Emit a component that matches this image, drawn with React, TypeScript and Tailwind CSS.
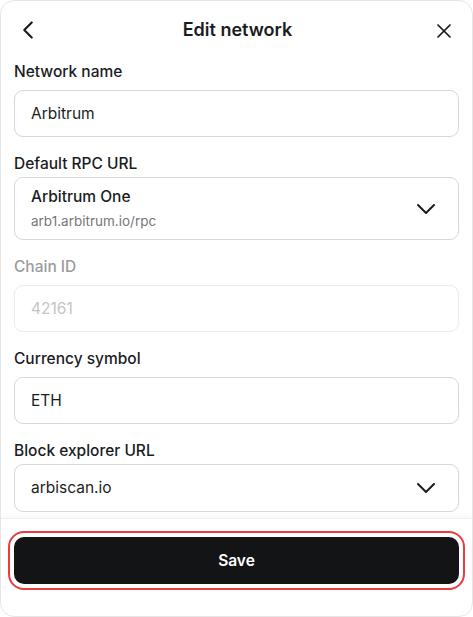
import { ChevronDown, ChevronLeft, X } from 'lucide-react';

function Label({ children, muted, tight }: { children: string; muted?: boolean; tight?: boolean }) {
  return (
    <div
      className={`text-[15.5px] font-medium leading-[20px] ${tight ? 'mb-[3px]' : 'mb-[8px]'} ${
        muted ? 'text-[#9a9b9d]' : 'text-[#1b1c1e]'
      }`}
    >
      {children}
    </div>
  );
}

function TextField({ value, disabled }: { value: string; disabled?: boolean }) {
  return (
    <div
      className={`h-[47px] w-full rounded-[9px] border px-[16px] flex items-center text-[15.5px] ${
        disabled ? 'border-[#ebebeb] text-[#c4c5c7]' : 'border-[#d6d7d9] text-[#1b1c1e]'
      }`}
    >
      {value}
    </div>
  );
}

export default function App() {
  return (
    <div
      className="w-[473px] h-[617px] bg-white rounded-[14px] border border-[#e6e6e6] overflow-hidden flex flex-col text-[#1b1c1e]"
      style={{ fontFamily: 'Inter, "Noto Sans", sans-serif' }}
    >
      {/* Header */}
      <div className="h-[54px] shrink-0 flex items-center justify-between pl-[12px] pr-[16px] pt-[3px]">
        <button type="button" className="w-[30px] h-[30px] flex items-center justify-center">
          <ChevronLeft size={30} strokeWidth={1.7} />
        </button>
        <h1 className="text-[18px] font-semibold">Edit network</h1>
        <button type="button" className="w-[24px] h-[24px] flex items-center justify-center mt-[2px]">
          <X size={24} strokeWidth={1.7} />
        </button>
      </div>

      {/* Form */}
      <div className="flex-1 flex flex-col gap-[17px] px-[13px] pt-[7px]">
        <div>
          <Label>Network name</Label>
          <TextField value="Arbitrum" />
        </div>

        <div>
          <Label tight>Default RPC URL</Label>
          <div className="h-[63px] w-full rounded-[9px] border border-[#d6d7d9] pl-[16px] pr-[16px] flex items-center justify-between">
            <div className="flex flex-col gap-[4px] mt-[1px]">
              <span className="text-[15.5px] font-medium leading-[20px]">Arbitrum One</span>
              <span className="text-[13.5px] text-[#76777a] leading-[20px]">arb1.arbitrum.io/rpc</span>
            </div>
            <ChevronDown size={32} strokeWidth={1.5} />
          </div>
        </div>

        <div>
          <Label muted>Chain ID</Label>
          <TextField value="42161" disabled />
        </div>

        <div>
          <Label>Currency symbol</Label>
          <TextField value="ETH" />
        </div>

        <div>
          <Label tight>Block explorer URL</Label>
          <div className="mt-[1px] h-[48px] w-full rounded-[9px] border border-[#d6d7d9] pl-[16px] pr-[16px] flex items-center justify-between text-[15.5px]">
            <span>arbiscan.io</span>
            <ChevronDown size={32} strokeWidth={1.5} />
          </div>
        </div>
      </div>

      {/* Footer */}
      <div className="h-[98px] shrink-0 px-[13px] pt-[18px] border-t border-[#f0f0f0] shadow-[0_-2px_6px_rgba(0,0,0,0.04)]">
        <button
          type="button"
          className="w-full h-[47px] rounded-[10px] bg-[#131416] text-white text-[15.5px] font-semibold outline-2 outline-offset-[4px] outline-[#ec3a3f]"
        >
          Save
        </button>
      </div>
    </div>
  );
}
